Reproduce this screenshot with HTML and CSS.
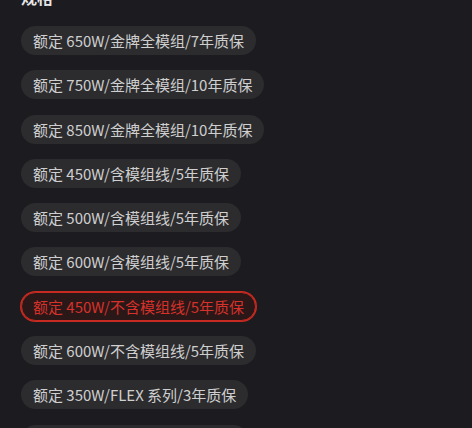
FILE: index.html
```html
<!DOCTYPE html>
<html lang="zh-CN">
<head>
    <meta charset="UTF-8">
    <meta name="viewport" content="width=device-width, initial-scale=1.0">
    <title>规格</title>
    <link rel="stylesheet" href="styles.css">
</head>
<body>
    <div class="spec-panel">
        <div class="spec-title">规格</div>
        <div class="spec-list">
            <div class="spec-item">额定 650W/金牌全模组/7年质保</div>
            <div class="spec-item">额定 750W/金牌全模组/10年质保</div>
            <div class="spec-item">额定 850W/金牌全模组/10年质保</div>
            <div class="spec-item">额定 450W/含模组线/5年质保</div>
            <div class="spec-item">额定 500W/含模组线/5年质保</div>
            <div class="spec-item">额定 600W/含模组线/5年质保</div>
            <!-- selected one -->
            <div class="spec-item spec-item-active">额定 450W/不含模组线/5年质保</div>
            <div class="spec-item">额定 600W/不含模组线/5年质保</div>
            <div class="spec-item">额定 350W/FLEX 系列/3年质保</div>
            <div class="spec-item">额定 550W/FLEX 系列/3年质保</div>
        </div>
    </div>
</body>
</html>
```

FILE: styles.css
```css
body{
    margin: 0;
    background-color: #1c1b1f;
    font-family: "Noto Sans CJK SC", "Noto Sans", sans-serif;
    overflow: hidden;
}

div.spec-panel{
    padding-left: 21px;
}

div.spec-title{
    color: #e6e6e6;
    font-size: 16px;
    line-height: 20px;
    font-weight: bold;
    margin-top: -13px;
    margin-bottom: 19px;
}

div.spec-list{
    display: flex;
    flex-direction: column;
    align-items: flex-start;
    gap: 15.3px;
}

div.spec-item{
    color: #cfcfd0;
    background-color: #2c2c2e;
    font-size: 15px;
    height: 29px;
    line-height: 29px;
    padding-left: 12px;
    padding-right: 12px;
    border-radius: 15px;
    white-space: nowrap;
    box-sizing: border-box;
}

/* red ring around the chosen item */
div.spec-item-active{
    color: #d6312a;
    background-color: #2a1818;
    border: 1px solid #c62a20;
    box-shadow: 0 0 0 1px #c62a20;
    line-height: 27px;
    padding-left: 11px;
    padding-right: 11px;
}
```
